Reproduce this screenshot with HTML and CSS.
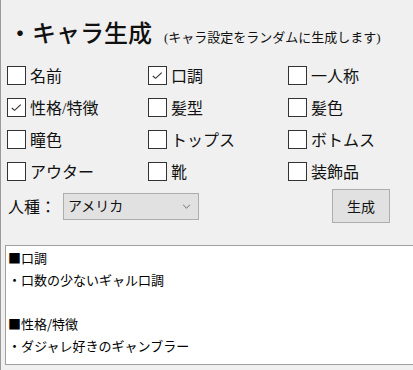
FILE: index.html
```html
<!DOCTYPE html>
<html lang="ja">

<head>
    <meta charset="UTF-8">
    <meta name="viewport" content="width=device-width, initial-scale=1.0">

    <link rel="stylesheet" href="styles.css">

    <title>キャラ生成</title>
</head>

<body>
    <div class="app">
        <h1 class="title">・キャラ生成<span class="sub">(キャラ設定をランダムに生成します)</span></h1>

        <div class="opts">
            <label class="opt"><input type="checkbox"><span class="box"><svg viewBox="0 0 18 18"><polyline points="4,9.5 7,12 13.5,6"/></svg></span>名前</label>
            <label class="opt"><input type="checkbox" checked><span class="box"><svg viewBox="0 0 18 18"><polyline points="4,9.5 7,12 13.5,6"/></svg></span>口調</label>
            <label class="opt"><input type="checkbox"><span class="box"><svg viewBox="0 0 18 18"><polyline points="4,9.5 7,12 13.5,6"/></svg></span>一人称</label>

            <label class="opt"><input type="checkbox" checked><span class="box"><svg viewBox="0 0 18 18"><polyline points="4,9.5 7,12 13.5,6"/></svg></span>性格/特徴</label>
            <label class="opt"><input type="checkbox"><span class="box"><svg viewBox="0 0 18 18"><polyline points="4,9.5 7,12 13.5,6"/></svg></span>髪型</label>
            <label class="opt"><input type="checkbox"><span class="box"><svg viewBox="0 0 18 18"><polyline points="4,9.5 7,12 13.5,6"/></svg></span>髪色</label>

            <label class="opt"><input type="checkbox"><span class="box"><svg viewBox="0 0 18 18"><polyline points="4,9.5 7,12 13.5,6"/></svg></span>瞳色</label>
            <label class="opt"><input type="checkbox"><span class="box"><svg viewBox="0 0 18 18"><polyline points="4,9.5 7,12 13.5,6"/></svg></span>トップス</label>
            <label class="opt"><input type="checkbox"><span class="box"><svg viewBox="0 0 18 18"><polyline points="4,9.5 7,12 13.5,6"/></svg></span>ボトムス</label>

            <label class="opt"><input type="checkbox"><span class="box"><svg viewBox="0 0 18 18"><polyline points="4,9.5 7,12 13.5,6"/></svg></span>アウター</label>
            <label class="opt"><input type="checkbox"><span class="box"><svg viewBox="0 0 18 18"><polyline points="4,9.5 7,12 13.5,6"/></svg></span>靴</label>
            <label class="opt"><input type="checkbox"><span class="box"><svg viewBox="0 0 18 18"><polyline points="4,9.5 7,12 13.5,6"/></svg></span>装飾品</label>
        </div>

        <div class="controls">
            <span class="race-label">人種：</span>
            <span class="select">
                <select>
                    <option>アメリカ</option>
                    <option>日本</option>
                </select>
                <svg class="chev" viewBox="0 0 10 6"><polyline points="1,1 5,5 9,1"/></svg>
            </span>
            <button class="gen">生成</button>
        </div>

        <div class="result">
            <div>■口調</div>
            <div>・口数の少ないギャル口調</div>
            <div>&nbsp;</div>
            <div>■性格/特徴</div>
            <div>・ダジャレ好きのギャンブラー</div>
        </div>
    </div>
</body>

</html>
```

FILE: styles.css
```css
html,
body {
    margin: 0;
    height: 100%;
    background-color: #f0f0f0;
    overflow: hidden;
}

body {
    border-left: 1px solid #9a9a9a;
    font-family: "Liberation Serif", "Noto Sans CJK JP", serif;
    color: #111;
}

.app {
    padding-left: 6px;
}

.title {
    margin: 18px 0 0 1px;
    font-size: 24px;
    line-height: 32px;
    font-weight: 500;
}

.title .sub {
    margin-left: 12px;
    font-size: 13px;
    font-weight: normal;
}

.opts {
    display: grid;
    grid-template-columns: 141px 140px 1fr;
    grid-auto-rows: 32px;
    margin-top: 5px;
}

.opt {
    display: flex;
    align-items: center;
    gap: 4px;
    font-size: 16px;
}

.opt input {
    display: none;
}

.box {
    width: 17px;
    height: 17px;
    border: 1px solid #333;
    background-color: #fff;
}

.box svg {
    display: none;
    width: 17px;
    height: 17px;
    fill: none;
    stroke: #333;
    stroke-width: 1.2;
}

.opt input:checked + .box svg {
    display: block;
}

.controls {
    display: flex;
    align-items: center;
    height: 34px;
    margin-top: 2px;
    padding-left: 1px;
}

.race-label {
    font-size: 16px;
    width: 55px;
}

.select {
    position: relative;
    width: 136px;
    height: 27px;
}

.select select {
    appearance: none;
    width: 100%;
    height: 100%;
    margin: 0;
    padding: 0 0 0 4px;
    border: 1px solid #adadad;
    border-radius: 0;
    background-color: #e1e1e1;
    font-family: "Liberation Serif", "Noto Sans CJK JP", serif;
    font-size: 14px;
    color: #111;
}

.select .chev {
    position: absolute;
    right: 8px;
    top: 11px;
    width: 9px;
    height: 5px;
    fill: none;
    stroke: #555;
    stroke-width: 1;
    pointer-events: none;
}

.gen {
    margin-left: 133px;
    width: 58px;
    height: 34px;
    border: 1px solid #adadad;
    background-color: #e1e1e1;
    font-family: "Liberation Serif", "Noto Sans CJK JP", serif;
    font-size: 14px;
    color: #111;
}

.result {
    margin: 22px 0 0 -2px;
    width: 420px;
    height: 120px;
    border: 1px solid #a0a0a0;
    background-color: #fff;
    padding: 1px 0 0 2px;
    box-sizing: border-box;
    font-family: "Noto Sans CJK JP", sans-serif;
    font-size: 13px;
    line-height: 22px;
    color: #000;
}
```
